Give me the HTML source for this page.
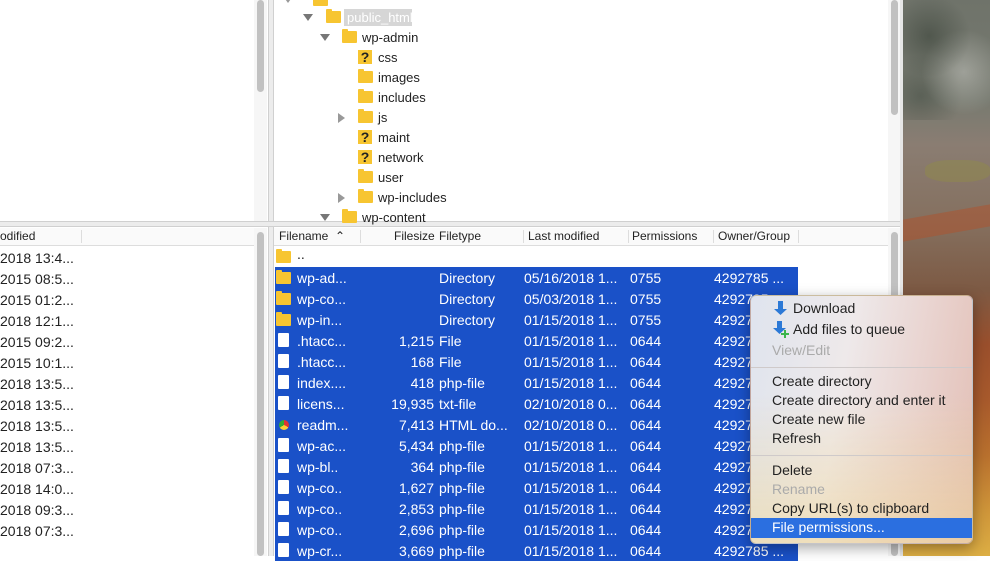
<!DOCTYPE html>
<html><head><meta charset="utf-8"><style>
*{margin:0;padding:0;box-sizing:border-box}
body{width:990px;height:556px;overflow:hidden;position:relative;background:#fff;font-family:"Liberation Sans",sans-serif;font-size:13px;color:#222}
.a{position:absolute;white-space:nowrap}
.fold{position:absolute;width:15px;height:12px;background:#f7c531;border-radius:1px}
.fold:before{content:"";position:absolute;left:0;top:-2px;width:6px;height:3px;background:#f7c531;border-radius:1px 1px 0 0}
.q{position:absolute;width:14px;height:14px;background:#f7c531;font-weight:bold;font-size:14px;line-height:14px;text-align:center;color:#222}
.file{position:absolute;width:11px;height:14px;background:#fff;border-radius:1px}
.tri{position:absolute;width:0;height:0}
.td{border-left:5px solid transparent;border-right:5px solid transparent;border-top:7px solid #777}
.tr{border-top:5px solid transparent;border-bottom:5px solid transparent;border-left:7px solid #999}
.row{position:absolute;left:275px;width:523px;height:21px;background:#1a51c8;color:#fff}
.row span{position:absolute;top:3px}
.m{position:absolute;left:772px;color:#222;font-size:14px}
</style></head><body>
<!-- wallpaper -->
<div class="a" style="left:903px;top:0;width:87px;height:556px;background:linear-gradient(180deg,#6f736a 0%,#777a70 18%,#8a7d72 26%,#85705f 40%,#7d5a44 52%,#9a4f2c 62%,#a85a2c 72%,#b9712e 82%,#cf963a 92%,#dcae44 100%)"></div>
<div class="a" style="left:903px;top:0;width:87px;height:120px;background:radial-gradient(circle at 30% 30%,rgba(40,50,40,.45),transparent 40%),radial-gradient(circle at 70% 60%,rgba(220,220,215,.4),transparent 45%),radial-gradient(circle at 20% 80%,rgba(40,50,40,.35),transparent 35%)"></div>
<div class="a" style="left:925px;top:160px;width:65px;height:22px;background:#8f8a4a;opacity:.5;border-radius:40%"></div>
<div class="a" style="left:903px;top:212px;width:87px;height:22px;background:#b0522c;opacity:.5;transform:skewY(-10deg)"></div>
<!-- window borders -->
<div class="a" style="left:0;top:0;width:903px;height:556px;background:#fff"></div>
<div class="a" style="left:268px;top:0;width:6px;height:556px;background:#ececec;border-left:1px solid #d0d0d0;border-right:1px solid #d0d0d0"></div>
<div class="a" style="left:0;top:221px;width:903px;height:6px;background:#ececec;border-top:1px solid #d0d0d0;border-bottom:1px solid #d0d0d0"></div>
<div class="a" style="left:900px;top:0;width:3px;height:556px;background:#e6e6e6"></div>
<!-- scrollbars -->
<div class="a" style="left:254px;top:0;width:13px;height:221px;background:#f6f6f6"></div>
<div class="a" style="left:257px;top:0;width:7px;height:92px;background:#c1c1c1;border-radius:4px"></div>
<div class="a" style="left:888px;top:0;width:12px;height:221px;background:#f6f6f6"></div>
<div class="a" style="left:891px;top:0;width:7px;height:115px;background:#c1c1c1;border-radius:4px"></div>
<div class="a" style="left:254px;top:228px;width:13px;height:328px;background:#f6f6f6"></div>
<div class="a" style="left:257px;top:232px;width:7px;height:324px;background:#c1c1c1;border-radius:4px"></div>
<div class="a" style="left:888px;top:228px;width:12px;height:328px;background:#f6f6f6"></div>
<div class="a" style="left:891px;top:232px;width:7px;height:324px;background:#c1c1c1;border-radius:4px"></div>
<!-- tree -->
<div class="tri td" style="left:283px;top:-4px;border-top-color:#999"></div>
<div class="fold" style="left:313px;top:-6px"></div>
<div class="tri td" style="left:303px;top:14px"></div>
<div class="fold" style="left:326px;top:11px"></div>
<div class="a" style="left:344px;top:9px;width:68px;height:17px;background:#d6d6d6"></div>
<div class="a" style="left:347px;top:10px;color:#fff">public_html</div>
<div class="tri td" style="left:320px;top:34px"></div>
<div class="fold" style="left:342px;top:31px"></div>
<div class="a" style="left:362px;top:30px">wp-admin</div>
<div class="q" style="left:358px;top:50px">?</div><div class="a" style="left:378px;top:50px">css</div>
<div class="fold" style="left:358px;top:71px"></div><div class="a" style="left:378px;top:70px">images</div>
<div class="fold" style="left:358px;top:91px"></div><div class="a" style="left:378px;top:90px">includes</div>
<div class="tri tr" style="left:338px;top:113px"></div>
<div class="fold" style="left:358px;top:111px"></div><div class="a" style="left:378px;top:110px">js</div>
<div class="q" style="left:358px;top:130px">?</div><div class="a" style="left:378px;top:130px">maint</div>
<div class="q" style="left:358px;top:150px">?</div><div class="a" style="left:378px;top:150px">network</div>
<div class="fold" style="left:358px;top:171px"></div><div class="a" style="left:378px;top:170px">user</div>
<div class="tri tr" style="left:338px;top:193px"></div>
<div class="fold" style="left:358px;top:191px"></div><div class="a" style="left:378px;top:190px">wp-includes</div>
<div class="tri td" style="left:320px;top:214px"></div>
<div class="fold" style="left:342px;top:211px"></div>
<div class="a" style="left:362px;top:210px">wp-content</div>
<!-- headers -->
<div class="a" style="left:0;top:228px;width:254px;height:18px;background:#fafafa;border-bottom:1px solid #ddd"></div>
<div class="a" style="left:0;top:229px;font-size:12px">odified</div>
<div class="a" style="left:81px;top:230px;width:1px;height:13px;background:#ddd"></div>
<div class="a" style="left:274px;top:228px;width:614px;height:18px;background:#fafafa;border-bottom:1px solid #ddd;font-size:12px">
<span class="a" style="left:5px;top:1px">Filename&nbsp; ⌃</span>
<span class="a" style="left:86px;top:2px;width:1px;height:13px;background:#ddd"></span>
<span class="a" style="left:120px;top:1px">Filesize</span>
<span class="a" style="left:165px;top:1px">Filetype</span>
<span class="a" style="left:249px;top:2px;width:1px;height:13px;background:#ddd"></span>
<span class="a" style="left:254px;top:1px">Last modified</span>
<span class="a" style="left:354px;top:2px;width:1px;height:13px;background:#ddd"></span>
<span class="a" style="left:358px;top:1px">Permissions</span>
<span class="a" style="left:439px;top:2px;width:1px;height:13px;background:#ddd"></span>
<span class="a" style="left:444px;top:1px">Owner/Group</span>
<span class="a" style="left:524px;top:2px;width:1px;height:13px;background:#ddd"></span>
</div>
<!-- left dates -->
<div class="a" style="left:0;top:248px;line-height:21px;font-size:14px">2018 13:4...<br>2015 08:5...<br>2015 01:2...<br>2018 12:1...<br>2015 09:2...<br>2015 10:1...<br>2018 13:5...<br>2018 13:5...<br>2018 13:5...<br>2018 13:5...<br>2018 07:3...<br>2018 14:0...<br>2018 09:3...<br>2018 07:3...</div>
<!-- .. row -->
<div class="fold" style="left:276px;top:251px"></div>
<div class="a" style="left:297px;top:246px;font-size:14px">..</div>
<!-- rows -->
<div style="font-size:14px">
<div class="row" style="top:267px"><div class="fold" style="left:1px;top:5px;position:absolute"></div><span style="left:22px">wp-ad...</span><span style="left:164px">Directory</span><span style="left:249px">05/16/2018 1...</span><span style="left:355px">0755</span><span style="left:439px">4292785 ...</span></div>
<div class="row" style="top:288px"><div class="fold" style="left:1px;top:5px;position:absolute"></div><span style="left:22px">wp-co...</span><span style="left:164px">Directory</span><span style="left:249px">05/03/2018 1...</span><span style="left:355px">0755</span><span style="left:439px">4292785</span></div>
<div class="row" style="top:309px"><div class="fold" style="left:1px;top:5px;position:absolute"></div><span style="left:22px">wp-in...</span><span style="left:164px">Directory</span><span style="left:249px">01/15/2018 1...</span><span style="left:355px">0755</span><span style="left:439px">4292785</span></div>
<div class="row" style="top:330px"><div class="file" style="left:3px;top:3px"></div><span style="left:22px">.htacc...</span><span style="left:110px;width:49px;text-align:right">1,215</span><span style="left:164px">File</span><span style="left:249px">01/15/2018 1...</span><span style="left:355px">0644</span><span style="left:439px">4292785</span></div>
<div class="row" style="top:351px"><div class="file" style="left:3px;top:3px"></div><span style="left:22px">.htacc...</span><span style="left:110px;width:49px;text-align:right">168</span><span style="left:164px">File</span><span style="left:249px">01/15/2018 1...</span><span style="left:355px">0644</span><span style="left:439px">4292785</span></div>
<div class="row" style="top:372px"><div class="file" style="left:3px;top:3px"></div><span style="left:22px">index....</span><span style="left:110px;width:49px;text-align:right">418</span><span style="left:164px">php-file</span><span style="left:249px">01/15/2018 1...</span><span style="left:355px">0644</span><span style="left:439px">4292785</span></div>
<div class="row" style="top:393px"><div class="file" style="left:3px;top:3px"></div><span style="left:22px">licens...</span><span style="left:110px;width:49px;text-align:right">19,935</span><span style="left:164px">txt-file</span><span style="left:249px">02/10/2018 0...</span><span style="left:355px">0644</span><span style="left:439px">4292785</span></div>
<div class="row" style="top:414px"><div class="a" style="left:4px;top:6px;width:10px;height:10px;border-radius:50%;background:conic-gradient(#d33 0 33%,#fc3 0 66%,#3a3 0)"></div><span style="left:22px">readm...</span><span style="left:110px;width:49px;text-align:right">7,413</span><span style="left:164px">HTML do...</span><span style="left:249px">02/10/2018 0...</span><span style="left:355px">0644</span><span style="left:439px">4292785</span></div>
<div class="row" style="top:435px"><div class="file" style="left:3px;top:3px"></div><span style="left:22px">wp-ac...</span><span style="left:110px;width:49px;text-align:right">5,434</span><span style="left:164px">php-file</span><span style="left:249px">01/15/2018 1...</span><span style="left:355px">0644</span><span style="left:439px">4292785</span></div>
<div class="row" style="top:456px"><div class="file" style="left:3px;top:3px"></div><span style="left:22px">wp-bl..</span><span style="left:110px;width:49px;text-align:right">364</span><span style="left:164px">php-file</span><span style="left:249px">01/15/2018 1...</span><span style="left:355px">0644</span><span style="left:439px">4292785</span></div>
<div class="row" style="top:477px"><div class="file" style="left:3px;top:3px"></div><span style="left:22px">wp-co..</span><span style="left:110px;width:49px;text-align:right">1,627</span><span style="left:164px">php-file</span><span style="left:249px">01/15/2018 1...</span><span style="left:355px">0644</span><span style="left:439px">4292785</span></div>
<div class="row" style="top:498px"><div class="file" style="left:3px;top:3px"></div><span style="left:22px">wp-co..</span><span style="left:110px;width:49px;text-align:right">2,853</span><span style="left:164px">php-file</span><span style="left:249px">01/15/2018 1...</span><span style="left:355px">0644</span><span style="left:439px">4292785</span></div>
<div class="row" style="top:519px"><div class="file" style="left:3px;top:3px"></div><span style="left:22px">wp-co..</span><span style="left:110px;width:49px;text-align:right">2,696</span><span style="left:164px">php-file</span><span style="left:249px">01/15/2018 1...</span><span style="left:355px">0644</span><span style="left:439px">4292785</span></div>
<div class="row" style="top:540px"><div class="file" style="left:3px;top:3px"></div><span style="left:22px">wp-cr...</span><span style="left:110px;width:49px;text-align:right">3,669</span><span style="left:164px">php-file</span><span style="left:249px">01/15/2018 1...</span><span style="left:355px">0644</span><span style="left:439px">4292785 ...</span></div>
</div>
<!-- context menu -->
<div class="a" style="left:750px;top:295px;width:223px;height:249px;border-radius:6px;overflow:hidden;box-shadow:0 4px 14px rgba(0,0,0,.35);border:1px solid rgba(0,0,0,.15);background:linear-gradient(180deg,rgba(255,255,255,0) 40%,rgba(240,215,150,.55) 100%),linear-gradient(100deg,#dfe4ee 0%,#eee9ea 40%,#e9d3cf 70%,#e2bdb3 100%)"></div>
<svg class="a" style="left:773px;top:300px" width="16" height="16"><path d="M5 1h5v8h4l-6.5 6L1 9h4z" fill="#2c79d6"/></svg>
<div class="m" style="left:793px;top:300px">Download</div>
<svg class="a" style="left:773px;top:320px" width="18" height="18"><path d="M4 1h5v7h4l-6.5 6L0 8h4z" fill="#2c79d6"/><path d="M11 10h2v3h3v2h-3v3h-2v-3H8v-2h3z" fill="#3bb54a"/></svg>
<div class="m" style="left:793px;top:321px">Add files to queue</div>
<div class="m" style="top:342px;color:#aaa">View/Edit</div>
<div class="a" style="left:751px;top:367px;width:221px;height:1px;background:#cfcaca"></div>
<div class="m" style="top:373px">Create directory</div>
<div class="m" style="top:392px">Create directory and enter it</div>
<div class="m" style="top:411px">Create new file</div>
<div class="m" style="top:430px">Refresh</div>
<div class="a" style="left:751px;top:455px;width:221px;height:1px;background:#cfcaca"></div>
<div class="m" style="top:462px">Delete</div>
<div class="m" style="top:481px;color:#aaa">Rename</div>
<div class="m" style="top:500px">Copy URL(s) to clipboard</div>
<div class="a" style="left:751px;top:518px;width:221px;height:20px;background:#2b6fe0"></div>
<div class="m" style="top:519px;color:#fff">File permissions...</div>
</body></html>
